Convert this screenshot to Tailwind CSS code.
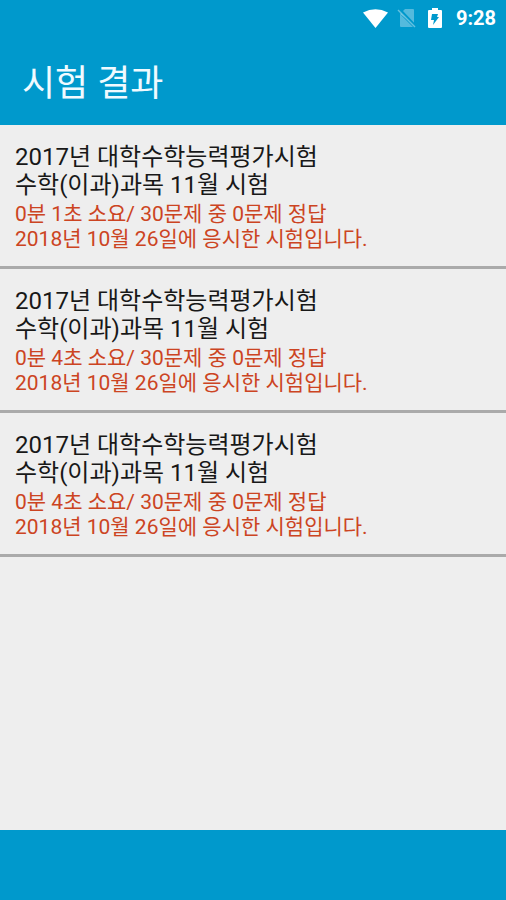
<!DOCTYPE html>
<html lang="ko">
<head>
<meta charset="utf-8">
<meta name="viewport" content="width=device-width, initial-scale=1">
<title>시험 결과</title>
<script src="https://cdn.jsdelivr.net/npm/@tailwindcss/browser@4"></script>
</head>
<body class="flex min-h-screen flex-col bg-[#eeeeee] font-['Roboto','Noto_Sans_CJK_KR',sans-serif]">
<header class="bg-[#0099cc] text-white">
<div class="flex h-9 items-center justify-end px-2.5">
<svg class="mr-2 h-5 w-7" viewBox="0 0 28 20" fill="currentColor" aria-hidden="true"><path d="M3 4.5Q15.500-2 28 4.500L15.500 20Z"/></svg>
<svg class="mr-3 h-5 w-5" viewBox="0 0 20 20" aria-hidden="true"><path d="M9 1h8q1 0 1 1v14L4 6Z" fill="#fff" fill-opacity=".33"/><path d="M4 6l13 13H5q-1 0-1-1Z" fill="#fff" fill-opacity=".33"/><path d="M3 1l17 18" stroke="#0099cc" stroke-width="3"/><path d="M2 2l17 17" stroke="#fff" stroke-opacity=".4" stroke-width="1.5"/></svg>
<svg class="mr-3.5 h-5 w-3.5" viewBox="0 0 14 20" aria-hidden="true"><path d="M4 0h6v2h3q1 0 1 1v16q0 1-1 1H1q-1 0-1-1V3q0-1 1-1h3Z" fill="#fff"/><path d="M4 6h6L9 9h2L5 17l1-5H3Z" fill="#0099cc"/></svg>
<span class="text-xl font-bold">9:28</span>
</div>
<h1 class="flex h-[89px] items-center px-[22px] pt-1.5 text-4xl text-[#f0faff]">시험 결과</h1>
</header>
<main class="grow">
<ul>
<li class="border-b-3 border-[#aaaaaa] px-[15px] pt-[18px] pb-3.5"><h2 class="text-2xl leading-7 text-[#181818]">2017년 대학수학능력평가시험<br>수학(이과)과목 11월 시험</h2><p class="mt-[3px] text-[21px] leading-[25px] text-[#cc4422]">0분 1초 소요/ 30문제 중 0문제 정답<br>2018년 10월 26일에 응시한 시험입니다.</p></li>
<li class="border-b-3 border-[#aaaaaa] px-[15px] pt-[18px] pb-3.5"><h2 class="text-2xl leading-7 text-[#181818]">2017년 대학수학능력평가시험<br>수학(이과)과목 11월 시험</h2><p class="mt-[3px] text-[21px] leading-[25px] text-[#cc4422]">0분 4초 소요/ 30문제 중 0문제 정답<br>2018년 10월 26일에 응시한 시험입니다.</p></li>
<li class="border-b-3 border-[#aaaaaa] px-[15px] pt-[18px] pb-3.5"><h2 class="text-2xl leading-7 text-[#181818]">2017년 대학수학능력평가시험<br>수학(이과)과목 11월 시험</h2><p class="mt-[3px] text-[21px] leading-[25px] text-[#cc4422]">0분 4초 소요/ 30문제 중 0문제 정답<br>2018년 10월 26일에 응시한 시험입니다.</p></li>
</ul>
</main>
<footer class="h-[70px] bg-[#0099cc]"></footer>
</body>
</html>
